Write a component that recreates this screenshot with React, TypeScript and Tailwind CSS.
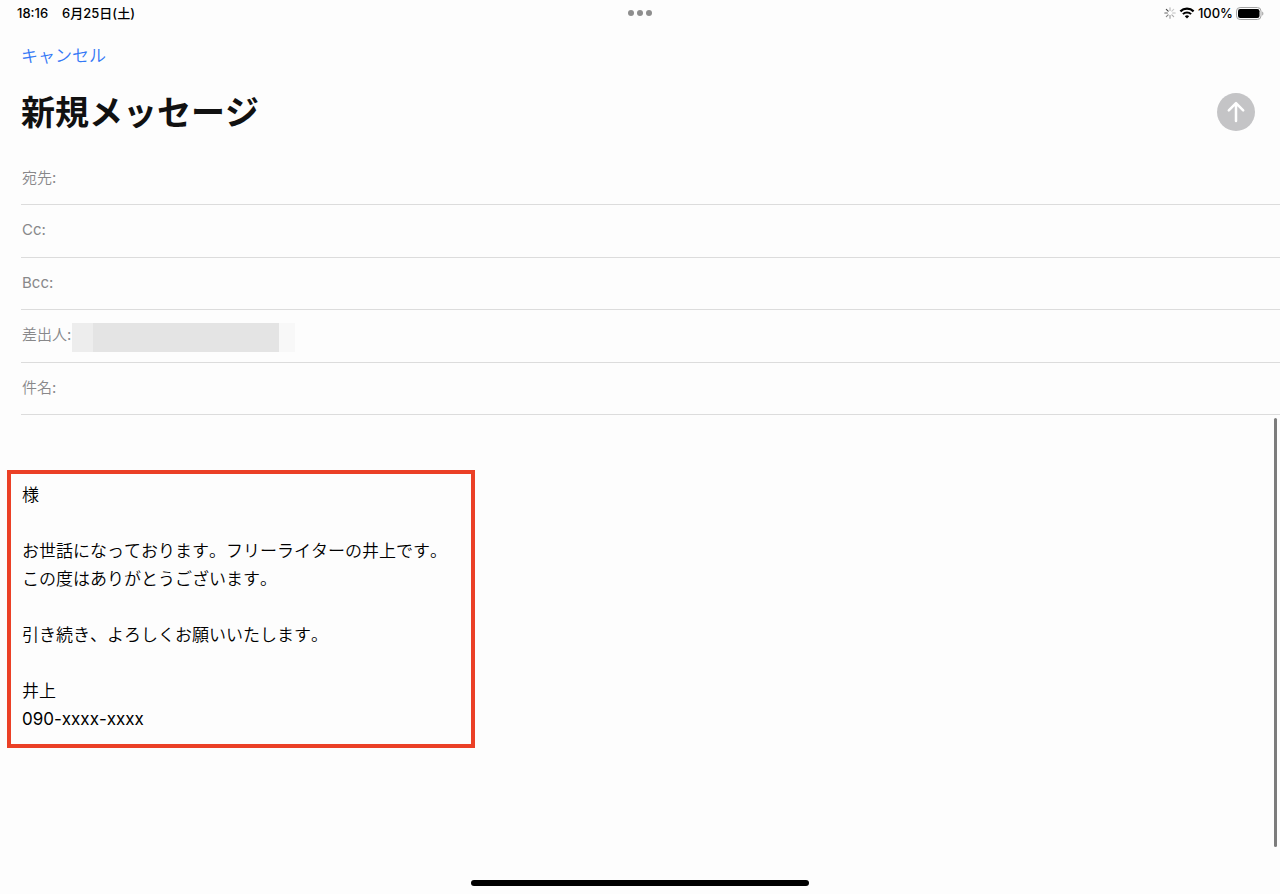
import { useState } from 'react';

const fields = [
  { id: 'to', label: '宛先:' },
  { id: 'cc', label: 'Cc:' },
  { id: 'bcc', label: 'Bcc:' },
  { id: 'from', label: '差出人:' },
  { id: 'subject', label: '件名:' },
];

const signature = `様

お世話になっております。フリーライターの井上です。
この度はありがとうございます。

引き続き、よろしくお願いいたします。

井上
090-xxxx-xxxx`;

const spokes = [0.35, 0.25, 0.3, 0.4, 0.5, 0.6, 0.75, 0.9];

const Spinner = () => (
  <svg width="12" height="12" viewBox="0 0 12 12" aria-hidden="true">
    {spokes.map((opacity, i) => (
      <line
        key={i}
        x1="6"
        y1="0.8"
        x2="6"
        y2="3.4"
        stroke="#333"
        strokeWidth="1.1"
        strokeLinecap="round"
        opacity={opacity}
        transform={`rotate(${i * 45} 6 6)`}
      />
    ))}
  </svg>
);

const Wifi = () => (
  <svg width="16" height="12" viewBox="0 0 16 12" fill="none" aria-hidden="true">
    <path d="M1.4 4.4a9.4 9.4 0 0 1 13.2 0" stroke="#000" strokeWidth="2.2" />
    <path d="M3.9 7.1a5.8 5.8 0 0 1 8.2 0" stroke="#000" strokeWidth="2" />
    <path d="M8 11.6 5.8 9.3a3.2 3.2 0 0 1 4.4 0z" fill="#000" />
  </svg>
);

const Battery = () => (
  <svg width="28" height="13" viewBox="0 0 28 13" fill="none" aria-hidden="true">
    <rect x="0.5" y="0.5" width="24.5" height="12" rx="3.6" stroke="#a3a3a3" />
    <rect x="2" y="2" width="21.5" height="9" rx="2.2" fill="#000" />
    <path d="M26.2 4.4c1.6.6 1.6 3.6 0 4.2z" fill="#a3a3a3" />
  </svg>
);

const StatusBar = () => (
  <header className="grid h-[26px] grid-cols-3 items-center pr-4 pl-[17px] text-[13px] leading-[18px] font-medium text-black">
    <div className="flex gap-[14px]">
      <span>18:16</span>
      <span>6月25日(土)</span>
    </div>
    <button
      type="button"
      aria-label="マルチタスク"
      className="flex gap-[3px] justify-self-center"
    >
      <span className="size-[6px] rounded-full bg-[#8e8e8e]" />
      <span className="size-[6px] rounded-full bg-[#8e8e8e]" />
      <span className="size-[6px] rounded-full bg-[#8e8e8e]" />
    </button>
    <div className="flex items-center justify-end gap-[3px]">
      <Spinner />
      <Wifi />
      <span>100%</span>
      <Battery />
    </div>
  </header>
);

const App = () => {
  const [body, setBody] = useState(signature);

  return (
    <div
      lang="ja"
      className="flex min-h-screen flex-col bg-[#fdfdfd] font-['Inter','Noto_Sans_CJK_JP',sans-serif] [font-kerning:none]"
    >
      <StatusBar />
      <div className="px-[21px] pt-4">
        <button
          type="button"
          className="block text-[17px] leading-7 font-[350] text-[#3478f6]"
        >
          キャンセル
        </button>
      </div>
      <div className="flex h-[84px] items-center justify-between pr-[25px] pl-[21px]">
        <h1 className="pt-[2px] text-[34px] leading-[42px] font-bold text-[#111]">
          新規メッセージ
        </h1>
        <button
          type="button"
          aria-label="送信"
          className="flex size-[38px] items-center justify-center rounded-full bg-[#c4c4c6]"
        >
          <svg width="20" height="22" viewBox="0 0 20 22" fill="none">
            <path
              d="M10 20V2.4M2.8 9.4 10 2.2l7.2 7.2"
              stroke="#fff"
              strokeWidth="2.5"
              strokeLinecap="round"
              strokeLinejoin="round"
            />
          </svg>
        </button>
      </div>
      <div className="-mt-px pl-[21px]">
        {fields.map(({ id, label }) => (
          <div
            key={id}
            className="flex items-center border-b border-[#dcdcdc] pb-[2px] pl-px odd:h-[52px] even:h-[53px]"
          >
            <label
              htmlFor={id}
              className="font-['Inter','Noto_Sans_CJK_JP_DemiLight','Noto_Sans_CJK_JP',sans-serif] text-[15px] leading-5 text-[#88888a]"
            >
              {label}
            </label>
            {id === 'from' ? (
              <output id={id} className="mt-1 ml-px flex h-[29px]">
                <span className="w-[21px] bg-[#ededed]" />
                <span className="w-[186px] bg-[#e4e4e4]" />
                <span className="w-4 bg-[#f8f8f8]" />
              </output>
            ) : (
              <input
                id={id}
                type="text"
                className="ml-2 flex-1 text-[15px] leading-5 outline-none"
              />
            )}
          </div>
        ))}
      </div>
      <div className="flex flex-1 items-stretch justify-between pt-[3px] pr-[3px] pl-[7px]">
        <div className="mt-[52px] w-[468px] self-start border-4 border-[#eb4026] px-[11px] pt-[7px] pb-[11px]">
          <textarea
            aria-label="本文"
            rows={9}
            value={body}
            onChange={(e) => setBody(e.target.value)}
            className="block w-full resize-none overflow-hidden font-['Inter','Noto_Sans_CJK_JP_DemiLight','Noto_Sans_CJK_JP',sans-serif] text-[17px] leading-7 text-black outline-none [font-kerning:none]"
          />
        </div>
        <div className="w-[3px] rounded-full bg-[#7c7c7c]" />
      </div>
      <footer className="flex h-[47px] items-end justify-center pb-2">
        <div className="h-[6px] w-[338px] rounded-full bg-black" />
      </footer>
    </div>
  );
};

export default App;
